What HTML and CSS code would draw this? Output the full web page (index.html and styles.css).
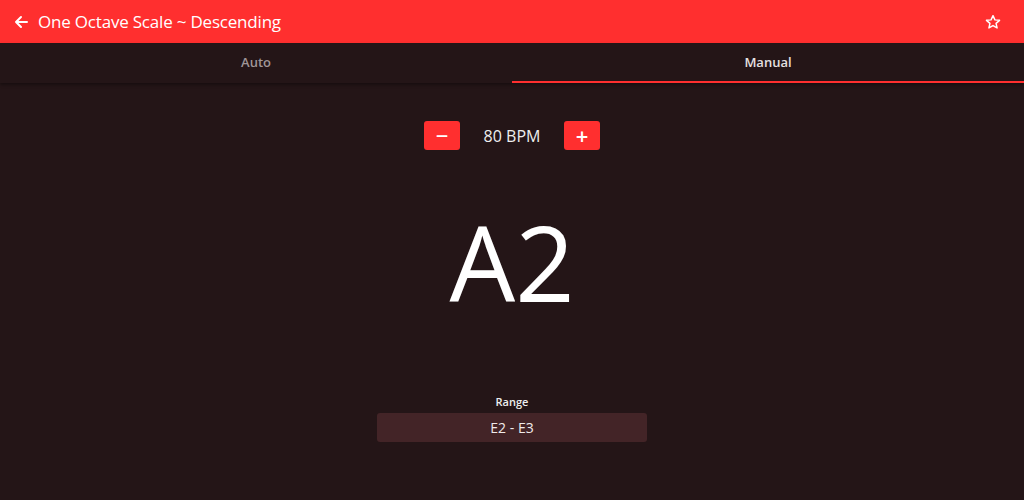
FILE: index.html
```html
<!DOCTYPE html>
<html>
<head>
  <meta charset="utf-8" />
  <title>One Octave Scale ~ Descending</title>
  <meta name="viewport" content="width=device-width, initial-scale=1">
  <link rel="stylesheet" href="styles.css">
</head>
<body>
  <div class="toolbar">
    <svg class="back" width="16" height="16" viewBox="0 0 16 16">
      <path d="M14 8H3M8 3L3 8l5 5" fill="none" stroke="#fff" stroke-width="2" stroke-linecap="round" stroke-linejoin="round"/>
    </svg>
    <div class="title">One Octave Scale ~ Descending</div>
    <svg class="star" width="16" height="16" viewBox="0 0 24 24">
      <path d="M12 2.5l2.9 6.3 6.9.7-5.2 4.6 1.5 6.8L12 17.4l-6.1 3.5 1.5-6.8-5.2-4.6 6.9-.7z" fill="none" stroke="#fff" stroke-width="2.2" stroke-linejoin="round"/>
    </svg>
  </div>

  <div class="tabs">
    <div class="tab">Auto</div>
    <div class="tab active">Manual</div>
  </div>

  <div class="content">
    <div class="tempo">
      <button class="step">&minus;</button>
      <span class="bpm">80 BPM</span>
      <button class="step">+</button>
    </div>

    <div class="note">A2</div>

    <div class="range">
      <div class="range-label">Range</div>
      <div class="range-box">E2 - E3</div>
    </div>
  </div>
</body>
</html>
```

FILE: styles.css
```css
html, body {
  margin: 0px;
  padding: 0px;
}
body {
  background: #241517;
  color: #fff;
  font-family: "Open Sans", "Noto Sans", sans-serif;
  height: 500px;
  overflow: hidden;
}
.toolbar {
  height: 43px;
  background: #ff2f2f;
  display: flex;
  align-items: center;
  padding: 0 23px 0 13px;
}
.back {
  margin-right: 9px;
}
.title {
  flex: 1;
  font-size: 17px;
  font-weight: 500;
  letter-spacing: -0.2px;
}
.tabs {
  display: flex;
  height: 40px;
  box-shadow: 0 2px 3px rgba(0, 0, 0, 0.35);
}
.tab {
  flex: 1;
  display: flex;
  align-items: center;
  justify-content: center;
  font-size: 13px;
  font-weight: 600;
  color: #a09698;
  box-sizing: border-box;
  border-bottom: 2px solid transparent;
}
.tab.active {
  color: #e6e0e0;
  border-bottom-color: #ff2f2f;
}
.content {
  display: flex;
  flex-direction: column;
  align-items: center;
}
.tempo {
  display: flex;
  align-items: center;
  margin-top: 38px;
}
.step {
  width: 36px;
  height: 29px;
  border: none;
  border-radius: 3px;
  background: #ff2f2f;
  color: #fff;
  font-family: inherit;
  font-size: 22px;
  font-weight: 600;
  line-height: 29px;
  padding: 0;
}
.bpm {
  width: 104px;
  text-align: center;
  font-size: 16px;
  color: #eee;
}
.note {
  margin-top: 47px;
  font-size: 104px;
  line-height: 130px;
  font-weight: 500;
}
.range {
  margin-top: 67px;
  display: flex;
  flex-direction: column;
  align-items: center;
}
.range-label {
  font-size: 11px;
  font-weight: 600;
  color: #eee;
  margin-bottom: 4px;
}
.range-box {
  width: 270px;
  height: 29px;
  line-height: 29px;
  text-align: center;
  background: #432427;
  border-radius: 3px;
  font-size: 14px;
  color: #f0eaea;
}
```
